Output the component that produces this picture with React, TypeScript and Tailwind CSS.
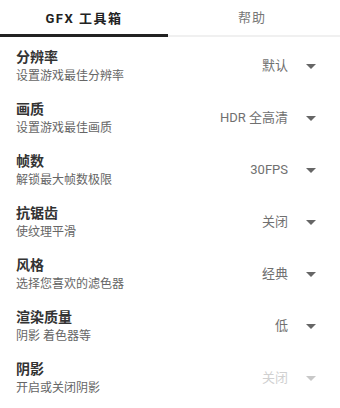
import React from "react";

interface Setting {
    title: string;
    desc: string;
    value: string;
    disabled?: boolean;
}

const settings: Setting[] = [
    { title: "分辨率", desc: "设置游戏最佳分辨率", value: "默认" },
    { title: "画质", desc: "设置游戏最佳画质", value: "HDR 全高清" },
    { title: "帧数", desc: "解锁最大帧数极限", value: "30FPS" },
    { title: "抗锯齿", desc: "使纹理平滑", value: "关闭" },
    { title: "风格", desc: "选择您喜欢的滤色器", value: "经典" },
    { title: "渲染质量", desc: "阴影 着色器等", value: "低" },
    { title: "阴影", desc: "开启或关闭阴影", value: "关闭", disabled: true },
];

function Caret({ light }: { light?: boolean }) {
    return (
        <svg width="10" height="5" viewBox="0 0 10 5" className={light ? "fill-[#c8c8c8]" : "fill-[#666]"}>
            <path d="M0 0 L10 0 L5 5 Z" />
        </svg>
    );
}

export default function App() {
    return (
        <div
            className="w-[340px] h-[408px] bg-white overflow-hidden"
            style={{ fontFamily: "Roboto, 'Noto Sans CJK SC', sans-serif" }}
        >
            {/* Tabs */}
            <div className="flex h-[37px]">
                <div className="w-[168px] flex items-center justify-center border-b-[3px] border-[#222] pt-[3px]">
                    <span className="text-[13px] font-bold tracking-[1.5px] text-[#222]">GFX 工具箱</span>
                </div>
                <div className="flex-1 flex items-center justify-center border-b-2 border-[#f0f0f0] pr-[4px]">
                    <span className="text-[13px] tracking-[1px] text-[#777]">帮助</span>
                </div>
            </div>

            <div className="pt-[3px]">
                {settings.map((s) => (
                    <div key={s.title} className="flex items-center h-[52px] pl-4 pr-[24px]">
                        <div className="flex-1 flex flex-col">
                            <span className="text-[14px] leading-[18px] font-bold text-[#333]">{s.title}</span>
                            <span className="text-[12px] leading-[17px] mt-[2px] text-[#666]">{s.desc}</span>
                        </div>
                        <span className={`text-[13px] mr-[18px] ${s.disabled ? "text-[#d0d0d0]" : "text-[#707070]"}`}>
                            {s.value}
                        </span>
                        <Caret light={s.disabled} />
                    </div>
                ))}
            </div>
        </div>
    );
}
